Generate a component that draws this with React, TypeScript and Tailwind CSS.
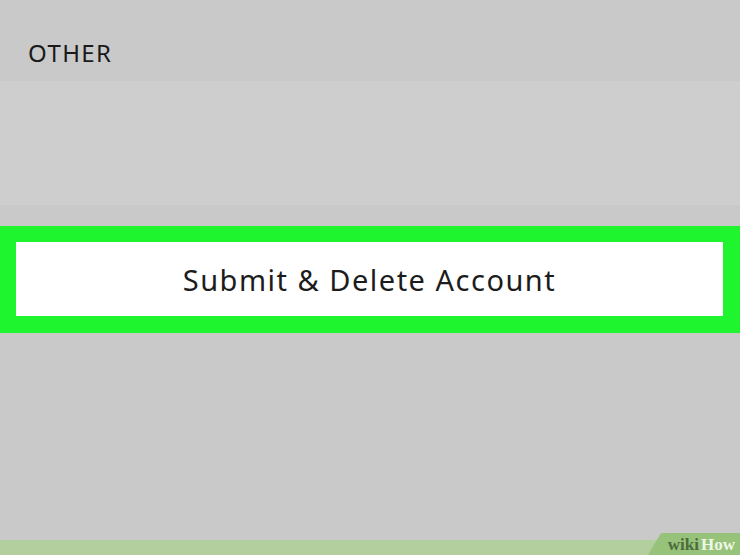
export default function App() {
  return (
    <div className="w-[740px] h-[555px] flex flex-col bg-[#c9c9c9] overflow-hidden" style={{ fontFamily: '"Noto Sans", "Open Sans", sans-serif' }}>
      {/* Section header */}
      <div className="h-[81px] flex items-end pl-[28px] pb-[16px] bg-[#c9c9c9]">
        <span className="text-[24px] leading-none text-[#1a1a1a] tracking-[1.4px]">OTHER</span>
      </div>

      {/* Empty row */}
      <div className="h-[124px] bg-[#cecece]" />

      <div className="h-[21px] bg-[#c9c9c9]" />

      {/* Highlighted button */}
      <div className="h-[107px] bg-[#1ff52e] px-[16px] pt-[16px] pb-[17px]">
        <button className="w-[707px] h-[74px] bg-white flex items-center justify-center">
          <span className="text-[29px] text-[#1c1c1c] leading-none tracking-[1.5px]">Submit &amp; Delete Account</span>
        </button>
      </div>

      <div className="flex-1 bg-[#c9c9c9]" />

      {/* Watermark strip */}
      <div className="relative h-[15px] bg-[#b3cf9d]">
        <div
          className="absolute right-0 bottom-0 h-[22px] w-[92px] bg-[#97c27a] flex items-center justify-end pr-[5px] pt-[1px]"
          style={{ clipPath: "polygon(13px 0, 100% 0, 100% 100%, 0 100%)" }}
        >
          <span className="text-[17px] font-bold leading-none" style={{ fontFamily: '"Liberation Serif", serif' }}>
            <span className="text-[#4d6b3c]">wiki</span>
            <span className="text-[#eef6e6] ml-[2px]">How</span>
          </span>
        </div>
      </div>
    </div>
  )
}
